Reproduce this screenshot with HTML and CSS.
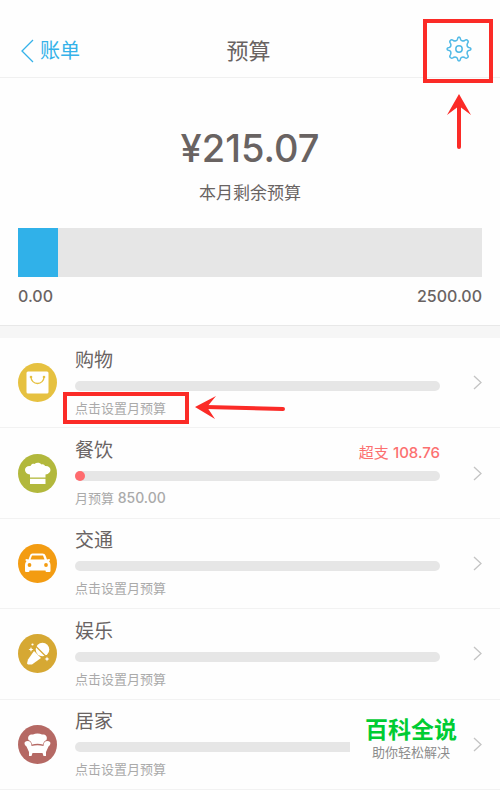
FILE: index.html
```html
<!DOCTYPE html>
<html lang="zh-CN">
<head>
<meta charset="utf-8">
<meta name="viewport" content="width=device-width, initial-scale=1">
<title>预算</title>
<link rel="stylesheet" href="styles.css">
</head>
<body>
<header class="nav">
  <a class="back" href="#bills">
    <svg class="back-icon" viewBox="0 0 13 24" aria-hidden="true"><path d="M12 1 1 12l11 11"/></svg>
    <span>账单</span>
  </a>
  <h1 class="nav-title">预算</h1>
  <button class="settings" type="button" aria-label="设置">
    <svg class="gear" viewBox="0 0 26 26" aria-hidden="true">
      <circle cx="13" cy="13" r="3.2"/>
      <path d="M11.5 3.2Q11.8 1 13 1T14.5 3.2Q14.8 4.5 16 4.8Q17.5 5.2 18.6 4.5Q20.7 3 21.5 4.5Q23 5.3 21.5 7.4Q20.8 8.5 21.2 10Q21.5 11.2 22.8 11.5Q25 11.8 25 13T22.8 14.5Q21.5 14.8 21.2 16Q20.8 17.5 21.5 18.6Q23 20.7 21.5 21.5Q20.7 23 18.6 21.5Q17.5 20.8 16 21.2Q14.8 21.5 14.5 22.8Q14.2 25 13 25T11.5 22.8Q11.2 21.5 10 21.2Q8.5 20.8 7.4 21.5Q5.3 23 4.5 21.5Q3 20.7 4.5 18.6Q5.2 17.5 4.8 16Q4.5 14.8 3.2 14.5Q1 14.2 1 13T3.2 11.5Q4.5 11.2 4.8 10Q5.2 8.5 4.5 7.4Q3 5.3 4.5 4.5Q5.3 3 7.4 4.5Q8.5 5.2 10 4.8Q11.2 4.5 11.5 3.2Z"/>
    </svg>
    <span class="mark mark-settings"></span>
    <svg class="arrow arrow-up" viewBox="0 0 24 56" aria-hidden="true"><path class="shaft" d="M12 10v43"/><path class="head" d="M12 0 24 21 12 12 0 21Z"/></svg>
  </button>
</header>

<main class="content">
  <section class="summary">
    <p class="amount">¥215.07</p>
    <p class="caption">本月剩余预算</p>
    <div class="meter"><div class="meter-fill"></div></div>
    <div class="scale"><span>0.00</span><span>2500.00</span></div>
  </section>

  <ul class="list">
    <li class="item">
      <svg class="badge" viewBox="0 0 39 39" aria-hidden="true">
        <circle cx="19.5" cy="19.5" r="19.5" fill="#e6c140"/>
        <rect x="8.500" y="8.500" width="22" height="22" rx="1.500" fill="#fff"/>
        <path d="M13 14a6.500 6.500 0 0 0 13 0" fill="none" stroke="#e6c140" stroke-width="1.300"/>
        <circle cx="13" cy="14" r="1.300" fill="#e6c140"/><circle cx="26" cy="14" r="1.300" fill="#e6c140"/>
      </svg>
      <div class="info">
        <div class="line"><h2 class="name">购物</h2></div>
        <div class="track"></div>
        <p class="hint">点击设置月预算<span class="mark mark-hint"></span>
          <svg class="arrow arrow-left" viewBox="0 0 90 24" aria-hidden="true"><path class="shaft" d="M11 11 88 13"/><path class="head" d="M0 11 21 0 12 11 20 23Z"/></svg>
        </p>
      </div>
      <svg class="chevron" viewBox="0 0 9 15" aria-hidden="true"><path d="m1 1 7 6.500L1 14"/></svg>
    </li>
    <li class="item">
      <svg class="badge" viewBox="0 0 39 39" aria-hidden="true">
        <circle cx="19.500" cy="19.500" r="19.500" fill="#b2b83c"/>
        <path d="M12 23.500V20.500C5.500 20 5 11.500 12.500 12C13.500 9.500 15.500 9.500 16.500 10C18.500 8.300 22 8.500 23.500 10.500C25.500 10 26.500 11 27 12C34 11.500 34.500 19.500 27.500 20.500V23.500Z" fill="#fff"/>
        <path d="M12 24.800h15.500V30h-15.500Z" fill="#fff"/>
      </svg>
      <div class="info">
        <div class="line"><h2 class="name">餐饮</h2><span class="over">超支 <span class="figure">108.76</span></span></div>
        <div class="track"><div class="track-dot"></div></div>
        <p class="hint">月预算 <span class="figure limit">850.00</span></p>
      </div>
      <svg class="chevron" viewBox="0 0 9 15" aria-hidden="true"><path d="m1 1 7 6.500L1 14"/></svg>
    </li>
    <li class="item">
      <svg class="badge" viewBox="0 0 39 39" aria-hidden="true">
        <circle cx="19.500" cy="19.500" r="19.500" fill="#f39c12"/>
        <path fill="#fff" fill-rule="evenodd" d="M14.500 9.500h10q2.500 0 3 2l1.500 4 2-.500q1.500 0 1 1.500l-1 .500q1.500 2 1.500 4v6q0 1-1 1H28.500q-1 0-1-1.500h-16q0 1.500-1 1.500H8q-1 0-1-1v-6q0-2 1.500-4l-1-.500q-.500-1.500 1-1.500l2 .500 1.500-4q.500-2 2.500-2ZM14 11.500l-1.500 4h14l-1.500-4Z"/>
        <circle cx="11.500" cy="21" r="1.900" fill="#f39c12"/><circle cx="28" cy="21" r="1.900" fill="#f39c12"/>
      </svg>
      <div class="info">
        <div class="line"><h2 class="name">交通</h2></div>
        <div class="track"></div>
        <p class="hint">点击设置月预算</p>
      </div>
      <svg class="chevron" viewBox="0 0 9 15" aria-hidden="true"><path d="m1 1 7 6.500L1 14"/></svg>
    </li>
    <li class="item">
      <svg class="badge" viewBox="0 0 39 39" aria-hidden="true">
        <circle cx="19.500" cy="19.500" r="19.500" fill="#d6a833"/>
        <circle cx="24.500" cy="15.500" r="6.800" fill="#fff"/>
        <path d="M16 17 23 24 14 30.500H10l-1-1 1-4Z" fill="#fff"/>
        <path d="m17 11.500 12 12" stroke="#d6a833" stroke-width="1.300"/>
        <path d="m13 13 .700 1.800 1.800.700-1.800.700L13 18l-.700-1.800-1.800-.700 1.800-.700ZM29 22.500l.700 1.800 1.800.700-1.800.700L29 27.500l-.700-1.800-1.800-.700 1.800-.700Z" fill="#fff"/>
        <circle cx="14.500" cy="10.500" r="1.100" fill="#fff"/>
      </svg>
      <div class="info">
        <div class="line"><h2 class="name">娱乐</h2></div>
        <div class="track"></div>
        <p class="hint">点击设置月预算</p>
      </div>
      <svg class="chevron" viewBox="0 0 9 15" aria-hidden="true"><path d="m1 1 7 6.500L1 14"/></svg>
    </li>
    <li class="item">
      <svg class="badge" viewBox="0 0 39 39" aria-hidden="true">
        <circle cx="19.500" cy="19.500" r="19.500" fill="#b56964"/>
        <path d="M10.500 15C9 11 12 9 15 9.500c2.500-1.500 6.500-1.500 9 0 3-.500 6 1.500 4.500 5.500q-3 1-3.500 4.500-5.500-1.500-11 0Q13.500 16 10.500 15Z" fill="#fff"/>
        <path d="M9.500 16q4 0 4 5 6-1.500 12 0 0-5 4-5c4 0 3.500 4 1 5.500L28 27v4h-2.500L24.500 28h-10l-1 3H11v-4L8.500 21.500C6 20 5.500 16 9.500 16Z" fill="#fff"/>
      </svg>
      <div class="info">
        <div class="line"><h2 class="name">居家</h2></div>
        <div class="track"></div>
        <p class="hint">点击设置月预算</p>
      </div>
      <svg class="chevron" viewBox="0 0 9 15" aria-hidden="true"><path d="m1 1 7 6.500L1 14"/></svg>
      <aside class="brand"><strong class="brand-name">百科全说</strong><span class="brand-tag">助你轻松解决</span></aside>
    </li>
  </ul>
</main>
</body>
</html>
```
FILE: styles.css
```css
* { box-sizing: border-box; }

body {
  margin: 0;
  min-height: 100vh;
  display: flex;
  flex-direction: column;
  background: #fefefe;
  color: #696362;
  font-family: Inter, "Noto Sans CJK SC", sans-serif;
}

h1, h2, p, ul { margin: 0; padding: 0; font-weight: 400; }

.nav {
  display: grid;
  grid-template-columns: 1fr auto 1fr;
  align-items: center;
  height: 78px;
  padding: 24px 24px 0 21px;
  border-bottom: 1px solid #f0f0f0;
}

.back {
  display: flex;
  align-items: center;
  gap: 6px;
  color: #35b2e9;
  font-size: 20px;
  line-height: 28px;
  text-decoration: none;
}
.back-icon { width: 13px; height: 24px; fill: none; stroke: currentColor; stroke-width: 1.3; }
.nav-title { font-size: 22px; line-height: 28px; }

.settings {
  position: relative;
  justify-self: end;
  display: flex;
  margin-bottom: 4px;
  padding: 4px;
  border: 0;
  background: none;
  color: #4fb9e6;
}
.gear { width: 26px; height: 26px; fill: none; stroke: currentColor; stroke-width: 1.5; }

.mark { position: absolute; border: 4px solid #fb2b27; pointer-events: none; }
.mark-settings { inset: -13px -17px -17px -19px; }
.mark-hint { inset: -6px -23px -6px -12px; }
.arrow { position: absolute; overflow: visible; pointer-events: none; }
.shaft { fill: none; stroke: #fb2b27; stroke-width: 4; stroke-linecap: round; }
.head { fill: #fb2b27; }
.arrow-up { top: 62px; left: 5px; width: 24px; height: 56px; }
.arrow-left { top: -2px; left: calc(100% + 29px); width: 90px; height: 24px; }

.content { flex: 1; display: flex; flex-direction: column; }

.summary {
  padding: 46px 18px 18px;
  border-bottom: 1px solid #e8e8e8;
}
.amount { font-size: 38px; font-weight: 500; line-height: 48px; text-align: center; }
.caption { margin-top: 8px; font-size: 17px; line-height: 26px; text-align: center; }
.meter { height: 49px; margin-top: 22px; background: #e6e6e6; }
.meter-fill { width: 8.6%; height: 100%; background: #30b1e9; }
.scale {
  display: flex;
  justify-content: space-between;
  margin-top: 8px;
  font-size: 16px;
  font-weight: 500;
  line-height: 22px;
}

.list {
  flex: 1;
  display: grid;
  grid-auto-rows: 1fr;
  border-top: 12px solid #f6f6f6;
  list-style: none;
}
.item {
  position: relative;
  display: flex;
  align-items: center;
  padding: 0 18px;
  border-bottom: 1px solid #f2f2f2;
}
.badge { flex: none; width: 39px; height: 39px; }
.info { flex: 1; margin: 0 33px 0 18px; padding-bottom: 1px; }
.line { display: flex; align-items: center; justify-content: space-between; height: 28px; }
.name { font-size: 19px; line-height: 28px; }
.over { color: #fc7070; font-size: 15px; }
.figure { font-weight: 500; }
.limit { font-size: 14px; }
.track { height: 10px; margin: 6px 0 7px; border-radius: 5px; background: #e6e6e6; }
.track-dot { width: 10px; height: 10px; border-radius: 5px; background: #ff6b6e; }
.hint { position: relative; width: fit-content; color: #aaa; font-size: 13px; line-height: 20px; }
.chevron { flex: none; width: 9px; height: 15px; fill: none; stroke: #c4c4c4; stroke-width: 1.3; }

.brand {
  position: absolute;
  right: 28px;
  bottom: 28px;
  display: flex;
  flex-direction: column;
  align-items: center;
  width: 122px;
  background: #fefefe;
}
.brand-name { color: #0c3; font-size: 23px; line-height: 26px; }
.brand-tag { color: #8c8c8c; font-size: 13px; line-height: 18px; }
```
